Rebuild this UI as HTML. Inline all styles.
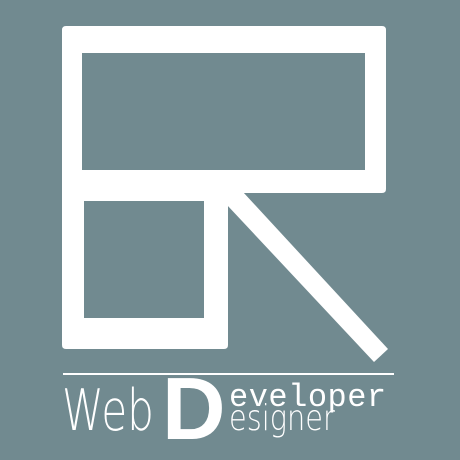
<!DOCTYPE html>
<html><head><meta charset="utf-8"><style>
html,body{margin:0;padding:0;background:#718a90;width:460px;height:460px;overflow:hidden;position:relative}
span{position:absolute;color:#fff;line-height:1;white-space:nowrap;transform-origin:0 0}
.w{font-family:"DejaVu Sans","Liberation Sans",sans-serif;font-weight:200}
svg{position:absolute;left:0;top:0}
</style></head><body>
<svg width="460" height="460" viewBox="0 0 460 460" xmlns="http://www.w3.org/2000/svg">
<path fill="#fff" fill-rule="evenodd" d="M66 26H382Q386 26 386 30V189Q386 193 382 193H66Q62 193 62 189V30Q62 26 66 26Z M82 53V170H365V53Z"/>
<path fill="#fff" fill-rule="evenodd" d="M62 185H228V345Q228 349 224 349H66Q62 349 62 345Z M84 201V318H204V201Z"/>
<polygon fill="#fff" points="227,192 243,192 388,349 374,362 227,205"/>
<rect x="63" y="373" width="331" height="2" fill="#fff"/>
</svg>
<span class="w" style="left:62px;top:383px;font-size:57px;transform:scaleX(0.74)">Web</span>
<span style="left:162px;top:365px;font-family:'Liberation Sans',sans-serif;font-weight:bold;font-size:88px">D</span>
<span style="left:229px;top:382px;font-family:'Liberation Mono',monospace;font-size:32px;letter-spacing:0.5px">eveloper</span>
<span class="w" style="left:229px;top:401px;font-size:36px;transform:scaleX(0.8)">esigner</span>
</body></html>
